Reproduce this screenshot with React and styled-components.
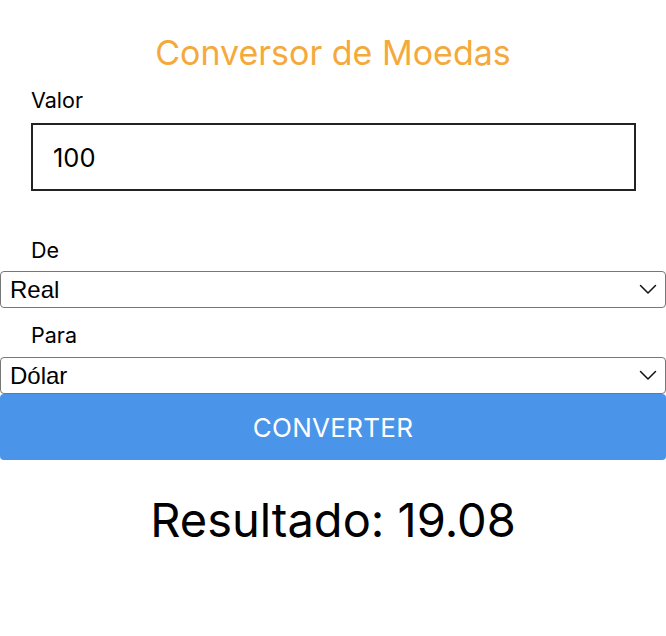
import React, { useState } from 'react';
import styled, { createGlobalStyle } from 'styled-components';

const GlobalStyle = createGlobalStyle`
    body {
        margin: 0;
        background: #fff;
        font-family: Inter, Roboto, 'Liberation Sans', sans-serif;
        color: #000;
    }
`;

const Screen = styled.div`
    width: 666px;
    display: flex;
    flex-direction: column;
    padding-top: 33px;
`;

const Title = styled.h1`
    margin: 0;
    color: #f5a93b;
    font-size: 34px;
    font-weight: 400;
    line-height: 40px;
    text-align: center;
`;

const Label = styled.label`
    display: block;
    padding-left: 31px;
    font-size: 21.5px;
    line-height: 28px;
    margin-top: ${(p) => p.$top || 0}px;
`;

const Field = styled.input`
    box-sizing: border-box;
    margin: 9px 0 0 31px;
    width: 605px;
    height: 68px;
    border: 2px solid #222;
    padding: 0 20px;
    font-family: inherit;
    font-size: 25.5px;
    outline: none;
`;

const SelectWrap = styled.div`
    position: relative;
    margin-top: ${(p) => p.$top || 0}px;
`;

const Select = styled.select`
    box-sizing: border-box;
    display: block;
    width: 666px;
    height: 37px;
    appearance: none;
    background: #fff;
    border: 1.5px solid #777;
    border-radius: 4px;
    padding: 0 40px 0 9px;
    font-family: 'Liberation Sans', Arial, sans-serif;
    font-size: 24px;
    color: #000;
`;

const Chevron = styled.svg`
    position: absolute;
    right: 9px;
    top: 13px;
    pointer-events: none;
`;

const Button = styled.button`
    box-sizing: border-box;
    width: 666px;
    height: 66px;
    border: none;
    border-radius: 4px;
    background: #4a95ea;
    color: #fff;
    font-family: inherit;
    font-size: 26px;
    letter-spacing: 0.3px;
    cursor: pointer;
`;

const Result = styled.p`
    margin: 32px 0 0;
    font-size: 47px;
    line-height: 56px;
    text-align: center;
`;

const rates = { Real: 1, 'Dólar': 5.241, Euro: 5.7 };

const CurrencySelect = ({ value, onChange, top }) => (
    <SelectWrap $top={top}>
        <Select value={value} onChange={(e) => onChange(e.target.value)}>
            {Object.keys(rates).map((k) => (
                <option key={k} value={k}>{k}</option>
            ))}
        </Select>
        <Chevron width="18" height="11" viewBox="0 0 18 11">
            <path d="M1.5 1.5 L9 9 L16.5 1.5" fill="none" stroke="#111" strokeWidth="1.5" strokeLinecap="round" strokeLinejoin="round" />
        </Chevron>
    </SelectWrap>
);

export default function App() {
    const [valor, setValor] = useState('100');
    const [de, setDe] = useState('Real');
    const [para, setPara] = useState('Dólar');
    const [resultado, setResultado] = useState('19.08');

    const converter = () => {
        const v = parseFloat(valor) || 0;
        setResultado(((v * rates[de]) / rates[para]).toFixed(2));
    };

    return (
        <Screen>
            <GlobalStyle />
            <Title>Conversor de Moedas</Title>
            <Label $top={13}>Valor</Label>
            <Field value={valor} onChange={(e) => setValor(e.target.value)} />
            <Label $top={45}>De</Label>
            <CurrencySelect value={de} onChange={setDe} top={7} />
            <Label $top={13}>Para</Label>
            <CurrencySelect value={para} onChange={setPara} top={8} />
            <Button onClick={converter}>CONVERTER</Button>
            <Result>Resultado: {resultado}</Result>
        </Screen>
    );
}
